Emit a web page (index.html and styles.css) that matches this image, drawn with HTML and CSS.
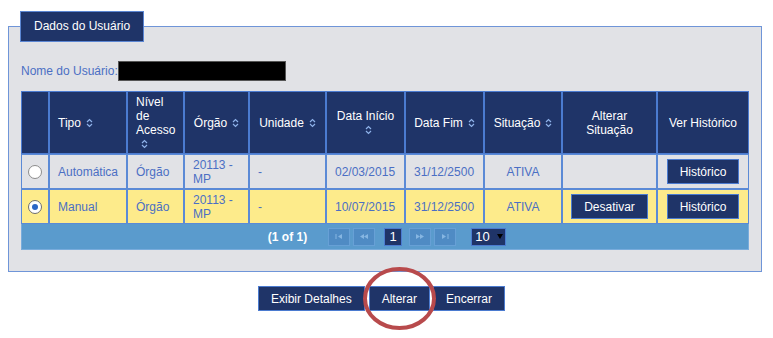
FILE: index.html
```html
<!DOCTYPE html>
<html lang="pt-BR">
<head>
<meta charset="utf-8">
<title>Dados do Usuário</title>
<link rel="stylesheet" href="styles.css">
</head>
<body>
<fieldset class="panel">
  <legend class="panel-legend">Dados do Usuário</legend>
  <div class="user-row">
    <span class="user-label">Nome do Usuário:</span>
    <span class="user-name"></span>
  </div>
  <table class="grid">
    <colgroup>
      <col class="c-radio"><col class="c-tipo"><col class="c-nivel"><col class="c-orgao"><col class="c-unid">
      <col class="c-ini"><col class="c-fim"><col class="c-sit"><col class="c-alt"><col class="c-hist">
    </colgroup>
    <thead>
      <tr>
        <th></th>
        <th class="left">Tipo<wbr><span class="sort"><svg width="7" height="10" viewBox="0 0 7 10"><path d="M1 4L3.5 1.5L6 4M1 6L3.5 8.5L6 6" fill="none" stroke="#8fb2ea" stroke-width="1.2"/></svg></span></th>
        <th class="left">Nível de Acesso<wbr><span class="sort"><svg width="7" height="10" viewBox="0 0 7 10"><path d="M1 4L3.5 1.5L6 4M1 6L3.5 8.5L6 6" fill="none" stroke="#8fb2ea" stroke-width="1.2"/></svg></span></th>
        <th>Órgão<wbr><span class="sort"><svg width="7" height="10" viewBox="0 0 7 10"><path d="M1 4L3.5 1.5L6 4M1 6L3.5 8.5L6 6" fill="none" stroke="#8fb2ea" stroke-width="1.2"/></svg></span></th>
        <th>Unidade<wbr><span class="sort"><svg width="7" height="10" viewBox="0 0 7 10"><path d="M1 4L3.5 1.5L6 4M1 6L3.5 8.5L6 6" fill="none" stroke="#8fb2ea" stroke-width="1.2"/></svg></span></th>
        <th>Data Início<wbr><span class="sort"><svg width="7" height="10" viewBox="0 0 7 10"><path d="M1 4L3.5 1.5L6 4M1 6L3.5 8.5L6 6" fill="none" stroke="#8fb2ea" stroke-width="1.2"/></svg></span></th>
        <th>Data Fim<wbr><span class="sort"><svg width="7" height="10" viewBox="0 0 7 10"><path d="M1 4L3.5 1.5L6 4M1 6L3.5 8.5L6 6" fill="none" stroke="#8fb2ea" stroke-width="1.2"/></svg></span></th>
        <th>Situação<wbr><span class="sort"><svg width="7" height="10" viewBox="0 0 7 10"><path d="M1 4L3.5 1.5L6 4M1 6L3.5 8.5L6 6" fill="none" stroke="#8fb2ea" stroke-width="1.2"/></svg></span></th>
        <th>Alterar Situação</th>
        <th>Ver Histórico</th>
      </tr>
    </thead>
    <tbody>
      <tr class="row-even">
        <td class="center"><span class="radio"></span></td>
        <td>Automática</td>
        <td>Órgão</td>
        <td>20113 - MP</td>
        <td>-</td>
        <td>02/03/2015</td>
        <td>31/12/2500</td>
        <td class="center">ATIVA</td>
        <td class="center"></td>
        <td class="center"><button class="btn">Histórico</button></td>
      </tr>
      <tr class="row-selected">
        <td class="center"><span class="radio checked"></span></td>
        <td>Manual</td>
        <td>Órgão</td>
        <td>20113 - MP</td>
        <td>-</td>
        <td>10/07/2015</td>
        <td>31/12/2500</td>
        <td class="center">ATIVA</td>
        <td class="center"><button class="btn">Desativar</button></td>
        <td class="center"><button class="btn">Histórico</button></td>
      </tr>
    </tbody>
  </table>
  <div class="pager">
    <span class="pager-count">(1 of 1)</span>
    <span class="pg-btn first"><svg width="8" height="5" viewBox="0 0 8 5"><path d="M1 0V5" stroke="#86b6e2" stroke-width="1"/><path d="M7 0L3 2.5L7 5Z" fill="#86b6e2"/></svg></span>
    <span class="pg-btn"><svg width="8" height="5" viewBox="0 0 8 5"><path d="M4 0L0 2.5L4 5ZM8 0L4 2.5L8 5Z" fill="#86b6e2"/></svg></span>
    <span class="pg-page">1</span>
    <span class="pg-btn"><svg width="8" height="5" viewBox="0 0 8 5"><path d="M0 0L4 2.5L0 5ZM4 0L8 2.5L4 5Z" fill="#86b6e2"/></svg></span>
    <span class="pg-btn last"><svg width="8" height="5" viewBox="0 0 8 5"><path d="M1 0L5 2.5L1 5Z" fill="#86b6e2"/><path d="M7 0V5" stroke="#86b6e2" stroke-width="1"/></svg></span>
    <span class="pg-select">10<svg width="6" height="5" viewBox="0 0 6 5"><path d="M0 0H6L3 5Z" fill="#000"/></svg></span>
  </div>
</fieldset>
<div class="actions">
  <button class="btn action">Exibir Detalhes</button>
  <span class="mark-wrap">
    <button class="btn action">Alterar</button>
    <svg class="highlight" width="73" height="63" viewBox="0 0 73 63"><ellipse cx="36.5" cy="31.5" rx="34.5" ry="29.5" fill="none" stroke="#b84a4c" stroke-width="4"/></svg>
  </span>
  <button class="btn action encerrar">Encerrar</button>
</div>
</body>
</html>
```

FILE: styles.css
```css
* { box-sizing: border-box; }
html { background: #fff; }
body {
  margin: 8px;
  font-family: "Liberation Sans", Arial, sans-serif;
  font-size: 12px;
  color: #4b6fc4;
  background: #fff;
  min-height: 322px;
}
.panel {
  margin: 3px 3px 0 0;
  padding: 0 11px 21px 12px;
  border: 1px solid #6f95d8;
  background: #e1e2e6;
  min-width: 0;
}
.panel-legend {
  margin-left: -1px;
  padding: 0 13px;
  height: 31px;
  line-height: 29px;
  background: #1f3468;
  border: 1px solid #5b86d3;
  color: #fff;
  font-size: 12px;
}
.user-row {
  display: flex;
  align-items: center;
  height: 20px;
  margin-top: 19px;
}
.user-label { color: #4b6fc4; }
.user-name {
  display: inline-block;
  width: 168px;
  height: 20px;
  background: #000;
  border: 1px solid #555;
}
.grid {
  margin-top: 10px;
  width: 728px;
  table-layout: fixed;
  border-collapse: separate;
  border-spacing: 0;
}
.c-radio { width: 28px; }
.c-tipo { width: 78px; }
.c-nivel { width: 57px; }
.c-orgao { width: 65px; }
.c-unid { width: 77px; }
.c-ini { width: 79px; }
.c-fim { width: 79px; }
.c-sit { width: 78px; }
.c-alt { width: 95px; }
.c-hist { width: 92px; }
.grid th {
  height: 63px;
  padding: 0 8px;
  background: #1f3468;
  color: #fff;
  font-weight: normal;
  line-height: 14px;
  text-align: center;
  border: 1px solid #4b7bd0;
}
.grid th.left { text-align: left; }
.sort {
  display: inline-block;
  margin-left: 5px;
  vertical-align: -1px;
}
.sort svg { display: block; }
.grid td {
  height: 35px;
  padding: 0 8px;
  line-height: 14px;
  border: 1px solid #5b8ad6;
  color: #4b6fc4;
}
.grid td.center { text-align: center; padding: 0; }
.row-even td { background: #e1e2e6; }
.row-selected td { background: #fdeb8b; }
.radio {
  display: inline-block;
  width: 14px;
  height: 14px;
  border-radius: 50%;
  border: 1px solid #8c8c8c;
  background: #fff;
  vertical-align: middle;
  position: relative;
}
.radio.checked { border-color: #6d6d6d; }
.radio.checked::after {
  content: "";
  position: absolute;
  left: 3px;
  top: 3px;
  width: 6px;
  height: 6px;
  border-radius: 50%;
  background: #2a66c6;
}
.btn {
  height: 25px;
  padding: 0 12px;
  background: #1f3468;
  border: 1px solid #4b7bd0;
  color: #fff;
  font-family: "Liberation Sans", Arial, sans-serif;
  font-size: 12px;
  vertical-align: middle;
}
.pager {
  width: 728px;
  height: 26px;
  display: flex;
  align-items: center;
  justify-content: center;
  padding-left: 4px;
  background: #5a9bcd;
  border: 1px solid #79acdc;
  border-top: 0;
}
.pager-count {
  color: #fff;
  font-weight: bold;
  margin-right: 21px;
}
.pg-btn {
  width: 22px;
  height: 18px;
  display: flex;
  align-items: center;
  justify-content: center;
  background: #4f8bc4;
  border: 1px solid #67a0d6;
  margin-right: 3px;
}
.pg-btn svg { display: block; }
.pg-page {
  width: 18px;
  height: 18px;
  margin: 0 7px 0 6px;
  background: #1f3468;
  border: 1px solid #4b7bd0;
  color: #fff;
  font-size: 13px;
  line-height: 16px;
  text-align: center;
}
.pg-btn.last { margin-right: 15px; }
.pg-select {
  width: 35px;
  height: 18px;
  display: flex;
  align-items: center;
  gap: 7px;
  padding-left: 3px;
  background: #1f3468;
  border: 1px solid #4b7bd0;
  color: #fff;
  font-size: 13px;
}
.actions {
  display: flex;
  justify-content: center;
  align-items: flex-start;
  margin-top: 14px;
  padding-right: 10px;
  padding-bottom: 24px;
}
.action { margin: 0; display: block; }
.mark-wrap {
  position: relative;
  display: block;
  margin-left: 4px;
}
.encerrar { margin-left: 3px; }
.highlight {
  position: absolute;
  left: -6px;
  top: -19px;
  width: 73px;
  height: 63px;
  display: block;
  overflow: visible;
  pointer-events: none;
}
```
